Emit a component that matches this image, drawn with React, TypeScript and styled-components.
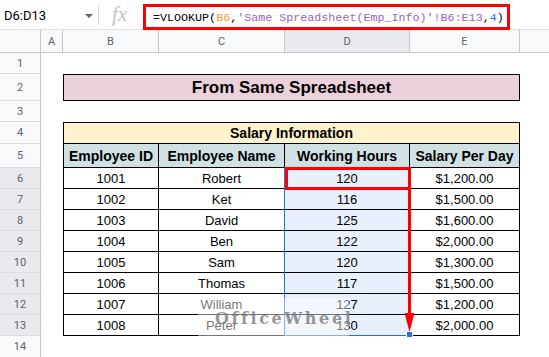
import React from 'react';
import styled, { createGlobalStyle } from 'styled-components';

const GlobalStyle = createGlobalStyle`
  html, body {
    margin: 0;
    padding: 0;
    background: #fff;
  }
  body {
    font-family: Roboto, "Liberation Sans", Arial, sans-serif;
  }
`;

const employees: { id: number; name: string; hours: number; salary: string }[] = [
  { id: 1001, name: 'Robert', hours: 120, salary: '$1,200.00' },
  { id: 1002, name: 'Ket', hours: 116, salary: '$1,500.00' },
  { id: 1003, name: 'David', hours: 125, salary: '$1,600.00' },
  { id: 1004, name: 'Ben', hours: 122, salary: '$2,000.00' },
  { id: 1005, name: 'Sam', hours: 120, salary: '$1,300.00' },
  { id: 1006, name: 'Thomas', hours: 117, salary: '$1,500.00' },
  { id: 1007, name: 'William', hours: 127, salary: '$1,200.00' },
  { id: 1008, name: 'Peter', hours: 130, salary: '$2,000.00' },
];

// F is only partly in view, its letter sits past the right edge
const columns = ['A', 'B', 'C', 'D', 'E', ''];

const Page = styled.div`
  width: 549px;
  height: 357px;
  overflow: hidden;
  position: relative;
`;

// ---- formula bar ----
const FormulaBar = styled.div`
  display: flex;
  align-items: flex-start;
  height: 30px;
  box-sizing: border-box;
  border-bottom: 1px solid #e1e1e1;
`;

const NameBox = styled.div`
  width: 98px;
  height: 29px;
  box-sizing: border-box;
  display: flex;
  align-items: center;
  justify-content: space-between;
  padding: 2px 5px 0 4px;
  font-size: 13px;
  color: #000;
`;

const Divider = styled.div`
  width: 1px;
  height: 20px;
  margin-top: 5px;
  background: #dadce0;
`;

const Fx = styled.div`
  width: 44px;
  height: 29px;
  box-sizing: border-box;
  padding-left: 13px;
  display: flex;
  align-items: center;
  font-family: "Liberation Serif", serif;
  font-style: italic;
  font-size: 21px;
  color: #c2c2c2;
`;

const FormulaBox = styled.div`
  margin-top: 4px;
  width: 367px;
  height: 26px;
  box-sizing: border-box;
  border: 3px solid #ff0000;
  padding: 1px 0 0 7px;
  display: flex;
  align-items: center;
  font-family: "Liberation Mono", "DejaVu Sans Mono", monospace;
  font-size: 11.7px;
  color: #000;
  white-space: pre;
`;

const Token = styled.span<{ $tone: 'ref' | 'str' | 'num' }>`
  color: ${p => (p.$tone === 'ref' ? '#f09d2a' : p.$tone === 'str' ? '#a05fba' : '#3b6fd6')};
`;

// ---- sheet ----
const SheetArea = styled.div`
  position: relative;
`;

const Grid = styled.div`
  display: grid;
  grid-template-columns: 41px 22px 96px 126px 125px 110px 100px;
  grid-template-rows: 23px 21px 27px 21px 22px 24px repeat(8, 21px) 22px;
  font-family: "Liberation Sans", Arial, sans-serif;
`;

const Corner = styled.div`
  background: #f8f9fa;
  border-right: 1px solid #c4c7c5;
  border-bottom: 1px solid #c4c7c5;
`;

const ColHead = styled.div<{ $sel?: boolean }>`
  display: flex;
  align-items: center;
  justify-content: center;
  background: ${p => (p.$sel ? '#e8eaed' : '#f8f9fa')};
  border-right: 1px solid #c4c7c5;
  border-bottom: 1px solid #c4c7c5;
  font-family: Roboto, sans-serif;
  font-size: 11px;
  color: #5f6368;
`;

const RowHead = styled.div<{ $sel?: boolean }>`
  display: flex;
  align-items: center;
  justify-content: center;
  background: ${p => (p.$sel ? '#e8eaed' : '#f8f9fa')};
  border-right: 1px solid #c4c7c5;
  border-bottom: 1px solid #dcdcdc;
  font-family: Roboto, sans-serif;
  font-size: 11px;
  color: #5f6368;
`;

const Blank = styled.div``;

const TableCell = styled.div<{ $first?: boolean; $sel?: boolean }>`
  display: flex;
  align-items: center;
  justify-content: center;
  background: ${p => (p.$sel ? '#e8f0fe' : '#fff')};
  border-right: 1px solid #000;
  border-bottom: 1px solid #000;
  border-left: ${p => (p.$first ? '1px solid #000' : 'none')};
  font-size: 13px;
  color: #000;
  white-space: nowrap;
`;

const HeadCell = styled(TableCell)`
  background: #d0e0e3;
  font-weight: bold;
  font-size: 14px;
`;

const BannerCell = styled.div<{ $bg: string; $size: number }>`
  grid-column: span 4;
  display: flex;
  align-items: center;
  justify-content: center;
  background: ${p => p.$bg};
  border: 1px solid #000;
  font-weight: bold;
  font-size: ${p => p.$size}px;
  color: #000;
`;

// ---- overlays ----
const Selection = styled.div`
  position: absolute;
  left: 284px;
  top: 137px;
  width: 126px;
  height: 169px;
  box-sizing: border-box;
  border-left: 1px solid #1a73e8;
  border-bottom: 1px solid #1a73e8;
  pointer-events: none;
`;

const ActiveMark = styled.div`
  position: absolute;
  left: 285px;
  top: 137px;
  width: 126px;
  height: 23px;
  box-sizing: border-box;
  border: 3px solid #ff0000;
`;

const Arrow = styled.svg`
  position: absolute;
  left: 400px;
  top: 159px;
`;

const Handle = styled.div`
  position: absolute;
  left: 406px;
  top: 301px;
  width: 7px;
  height: 7px;
  box-sizing: border-box;
  background: #1a73e8;
  border: 1px solid #fff;
`;

const Watermark = styled.div`
  position: absolute;
  left: 198px;
  top: 268px;
  width: 151px;
  height: 38px;
  display: flex;
  align-items: center;
  gap: 11px;
  padding: 2px 0 0 6px;
  box-sizing: border-box;
  background: rgba(255, 255, 255, 0.45);
  font-family: "DejaVu Serif", "Liberation Serif", serif;
  font-weight: bold;
  font-size: 16px;
  letter-spacing: 2.6px;
  color: rgba(115, 115, 115, 0.75);
  white-space: nowrap;
`;

const FormulaBarRow = () => (
  <FormulaBar>
    <NameBox>
      D6:D13
      <svg width="8" height="4" viewBox="0 0 8 4">
        <path d="M0 0 L8 0 L4 4 Z" fill="#5f6368" />
      </svg>
    </NameBox>
    <Divider />
    <Fx>fx</Fx>
    <FormulaBox>
      =VLOOKUP(<Token $tone="ref">B6</Token>,<Token $tone="str">'Same Spreadsheet(Emp_Info)'!B6:E13</Token>,<Token $tone="num">4</Token>)
    </FormulaBox>
  </FormulaBar>
);

const EmptyRow = ({ n }: { n: number }) => (
  <>
    <RowHead>{n}</RowHead>
    {[0, 1, 2, 3, 4, 5].map(i => <Blank key={i} />)}
  </>
);

export default function App() {
  return (
    <>
      <GlobalStyle />
      <Page>
        <FormulaBarRow />
        <SheetArea>
          <Grid>
            <Corner />
            {columns.map((c, i) => (
              <ColHead key={i} $sel={c === 'D'}>{c}</ColHead>
            ))}

            <EmptyRow n={1} />

            <RowHead>2</RowHead>
            <Blank />
            <BannerCell $bg="#ead1dc" $size={17}>From Same Spreadsheet</BannerCell>
            <Blank />

            <EmptyRow n={3} />

            <RowHead>4</RowHead>
            <Blank />
            <BannerCell $bg="#fff2cc" $size={14}>Salary Information</BannerCell>
            <Blank />

            <RowHead>5</RowHead>
            <Blank />
            <HeadCell $first>Employee ID</HeadCell>
            <HeadCell>Employee Name</HeadCell>
            <HeadCell>Working Hours</HeadCell>
            <HeadCell>Salary Per Day</HeadCell>
            <Blank />

            {employees.map((e, i) => (
              <React.Fragment key={e.id}>
                <RowHead $sel>{i + 6}</RowHead>
                <Blank />
                <TableCell $first>{e.id}</TableCell>
                <TableCell>{e.name}</TableCell>
                <TableCell $sel>{e.hours}</TableCell>
                <TableCell>{e.salary}</TableCell>
                <Blank />
              </React.Fragment>
            ))}

            <EmptyRow n={14} />
          </Grid>

          <Selection />
          <ActiveMark />
          <Arrow width="18" height="146" viewBox="0 0 18 146">
            <line x1="9.5" y1="0" x2="9.5" y2="127" stroke="#ff0000" strokeWidth="3" />
            <polygon points="4.5,124 14.5,124 9.5,143" fill="#ff0000" />
          </Arrow>
          <Handle />
          <Watermark>
            <svg width="22" height="27" viewBox="0 0 24 28">
              <polygon points="12,2 22,7.5 22,20.5 12,26 2,20.5 2,7.5" fill="none" stroke="rgba(115,115,115,0.7)" strokeWidth="2.4" />
              <path d="M17 10 L12 7 L7 10 L7 18 L12 21 L17 18" fill="none" stroke="rgba(115,115,115,0.7)" strokeWidth="2.4" />
            </svg>
            <span>OfficeWheel</span>
          </Watermark>
        </SheetArea>
      </Page>
    </>
  );
}
